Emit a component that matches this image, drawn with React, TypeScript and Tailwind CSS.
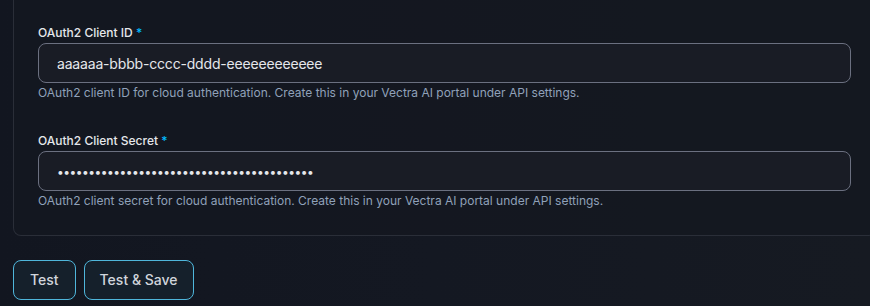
const fields = [
  {
    label: "OAuth2 Client ID",
    type: "text",
    value: "aaaaaa-bbbb-cccc-dddd-eeeeeeeeeeee",
    help: "OAuth2 client ID for cloud authentication. Create this in your Vectra AI portal under API settings.",
  },
  {
    label: "OAuth2 Client Secret",
    type: "password",
    value: "x".repeat(41),
    help: "OAuth2 client secret for cloud authentication. Create this in your Vectra AI portal under API settings.",
  },
];

export default function App() {
  return (
    <div
      className="w-[870px] h-[306px] overflow-hidden bg-gradient-to-r from-[#121620] via-[#141822] to-[#161a22] text-gray-200"
      style={{ fontFamily: "Inter, 'Noto Sans', sans-serif" }}
    >
      <div className="ml-[13px] -mt-2 w-[863px] rounded-b-lg border border-t-0 border-[#2a2e38] bg-[#141821]/80 px-6 pt-[33px] pb-[26px]">
        <div className="flex flex-col gap-[32px]">
          {fields.map((f) => (
            <div key={f.label} className="flex flex-col">
              <label className="text-xs leading-4 font-medium text-gray-200 mb-[2px]">
                {f.label} <span className="text-sky-400">*</span>
              </label>
              <input
                type={f.type}
                defaultValue={f.value}
                readOnly
                className={
                  f.type === "password"
                    ? "h-[40px] w-full rounded-lg border border-[#6b7080] bg-[#191c25] px-[18px] text-[12px] tracking-[-0.5px] text-gray-200 outline-none"
                    : "h-[40px] w-full rounded-lg border border-[#6b7080] bg-[#191c25] px-[18px] text-sm tracking-[-0.18px] text-gray-200 outline-none"
                }
              />
              <p className="mt-[2px] text-xs leading-4 text-slate-400">{f.help}</p>
            </div>
          ))}
        </div>
      </div>
      <div className="ml-[13px] mt-[24px] flex gap-2">
        <button className="h-[40px] rounded-lg border border-[#4fb6db] bg-[#15202b] px-[16px] text-sm font-medium text-gray-300">
          Test
        </button>
        <button className="h-[40px] rounded-lg border border-[#4fb6db] bg-[#15202b] px-[15px] text-sm font-medium text-gray-300">
          Test &amp; Save
        </button>
      </div>
    </div>
  );
}
